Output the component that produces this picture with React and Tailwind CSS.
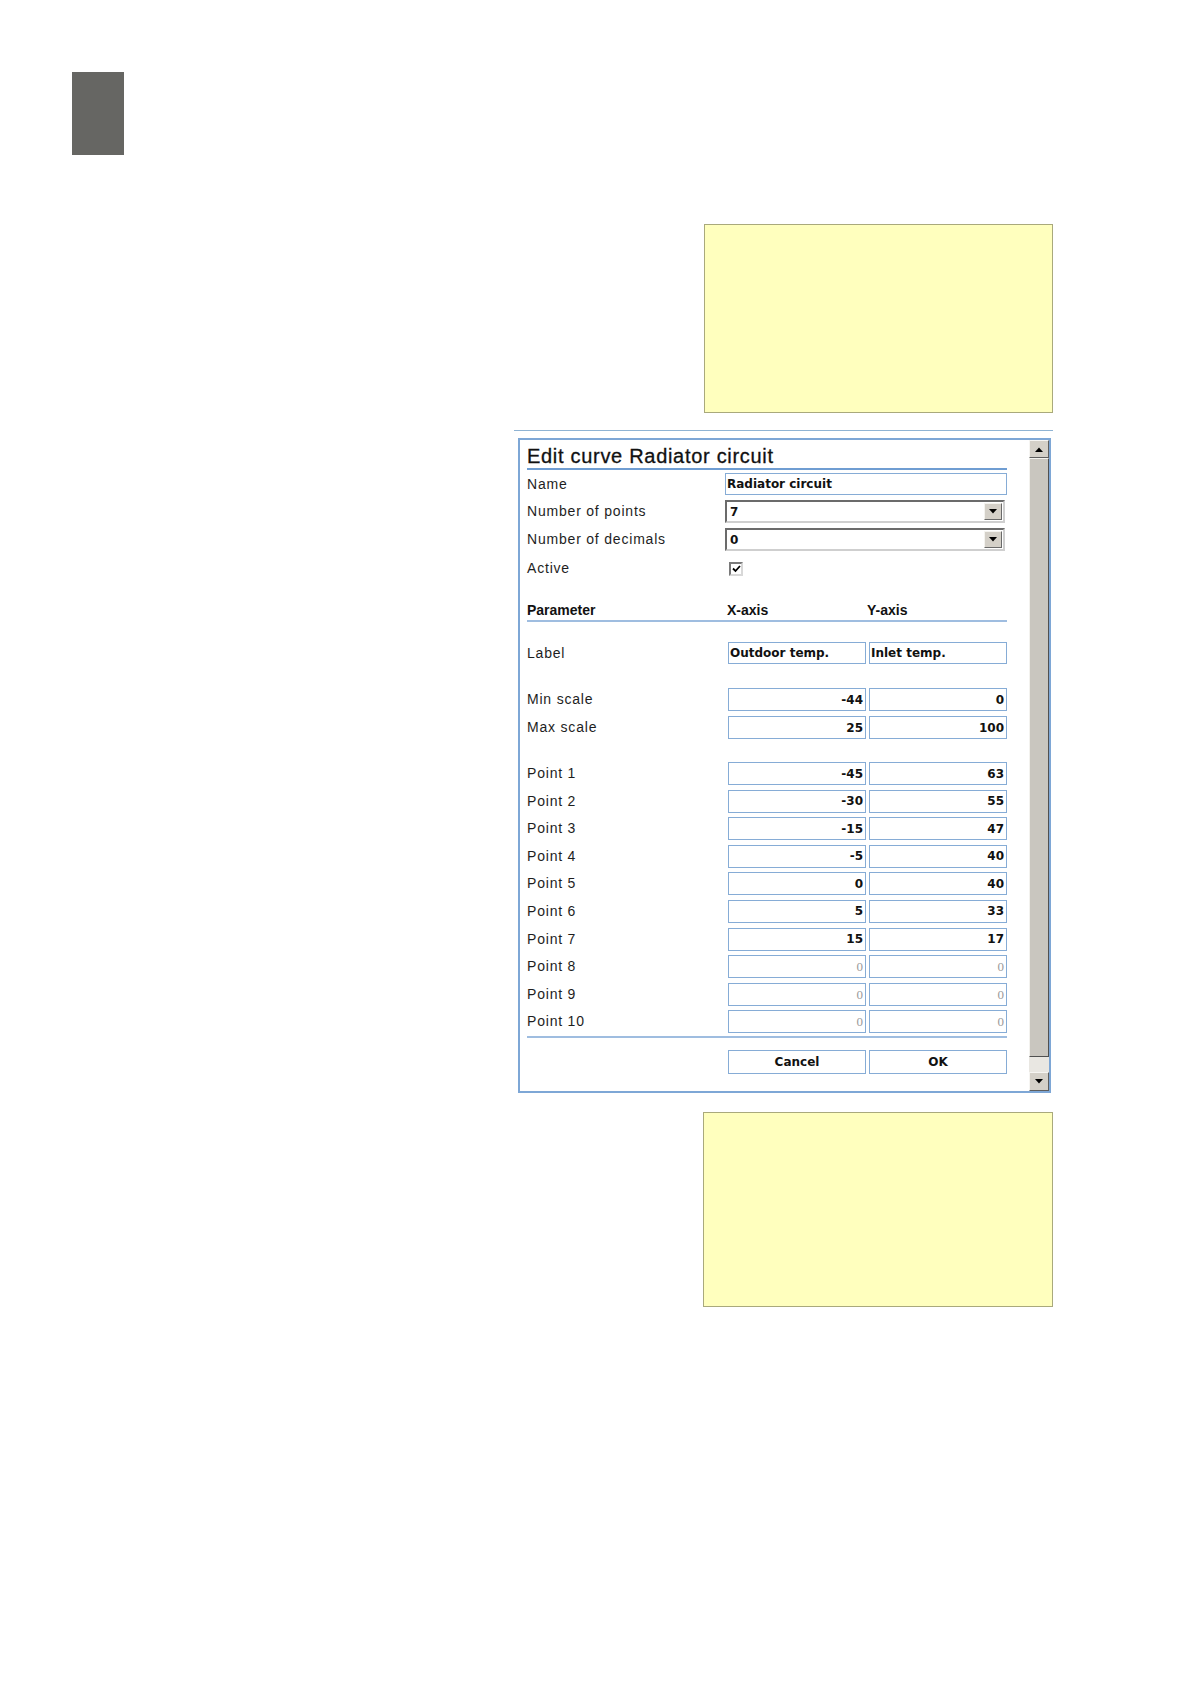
import React from 'react';

const labelCls = "font-['Liberation_Sans',Arial,sans-serif] text-[14px] tracking-[0.8px] text-[#1e1e1e]";
const valueCls = "font-['DejaVu_Sans',Verdana,sans-serif] font-bold text-[12px] text-[#111]";
const boxCls = "border-[1.5px] border-[#86acd6] bg-white";

const points = [
  [-45, 63],
  [-30, 55],
  [-15, 47],
  [-5, 40],
  [0, 40],
  [5, 33],
  [15, 17],
  [0, 0, true],
  [0, 0, true],
  [0, 0, true],
];

function NumBox({ value, off }) {
  return (
    <div className={`${boxCls} w-[138px] h-[23px] flex items-center justify-end pr-[2px]`}>
      <span className={off ? "font-['Liberation_Serif',serif] text-[13px] text-[#9a9a9a]" : `${valueCls} text-[11.5px]`}>
        {value}
      </span>
    </div>
  );
}

function PairRow({ label, x, y, off }) {
  return (
    <div className="flex items-center h-[23px]">
      <div className={`${labelCls} w-[201px]`}>{label}</div>
      <div className="flex gap-[3px]">
        <NumBox value={x} off={off} />
        <NumBox value={y} off={off} />
      </div>
    </div>
  );
}

function Caret() {
  return (
    <svg width="8" height="5" viewBox="0 0 8 5">
      <path d="M0 0h8L4 4.5z" fill="#000" />
    </svg>
  );
}

function Select({ value }) {
  return (
    <div className="w-[280px] h-[23px] flex items-center border-2 border-t-[#6b6b6b] border-l-[#6b6b6b] border-r-[#cfcfcf] border-b-[#cfcfcf] bg-white">
      <span className={`${valueCls} flex-1 pl-[3px]`}>{value}</span>
      <div className="w-[18px] h-[17px] mr-[1px] flex items-center justify-center bg-[#d4d0c8] border border-t-[#f4f3ef] border-l-[#f4f3ef] border-r-[#6a6a6a] border-b-[#6a6a6a]">
        <Caret />
      </div>
    </div>
  );
}

function ScrollBtn({ up }) {
  return (
    <div className="h-full flex items-center justify-center bg-[#d4d0c8] border border-t-[#f6f5f2] border-l-[#f6f5f2] border-r-[#5e5e5e] border-b-[#5e5e5e]">
      <svg width="8" height="5" viewBox="0 0 8 5" className={up ? 'rotate-180' : ''}>
        <path d="M0 0h8L4 4.5z" fill="#000" />
      </svg>
    </div>
  );
}

function Dialog() {
  return (
    <div className="mt-[7px] ml-[4px] w-[533px] h-[655px] border-2 border-[#7ea7d6] flex bg-white">
      <div className="flex-1 pl-[7px] pr-[22px]">
        <div className="pt-[4px] h-[28px] leading-[24px] font-['Liberation_Sans',Arial,sans-serif] font-medium text-[20px] tracking-[0.7px] text-[#111] [-webkit-text-stroke:0.3px_#111]">
          Edit curve Radiator circuit
        </div>
        <div className="h-[2px] bg-[#6f9dd2]" />

        <div className="mt-[3px] flex flex-col gap-[5px]">
          <div className="flex items-center h-[22px]">
            <div className={`${labelCls} w-[198px]`}>Name</div>
            <div className={`${boxCls} w-[282px] h-[22px] flex items-center pl-[1px]`}>
              <span className={valueCls}>Radiator circuit</span>
            </div>
          </div>
          <div className="flex items-center h-[23px]">
            <div className={`${labelCls} w-[198px]`}>Number of points</div>
            <Select value="7" />
          </div>
          <div className="flex items-center h-[23px]">
            <div className={`${labelCls} w-[198px]`}>Number of decimals</div>
            <Select value="0" />
          </div>
          <div className="flex items-center h-[25px]">
            <div className={`${labelCls} w-[202px]`}>Active</div>
            <div className="w-[14px] h-[14px] border-2 border-t-[#7a7a7a] border-l-[#7a7a7a] border-r-[#d8d8d8] border-b-[#d8d8d8] bg-white flex items-center justify-center">
              <svg width="9" height="8" viewBox="0 0 9 8">
                <path d="M1 3.5l2.5 2.5L8 1" stroke="#000" strokeWidth="1.8" fill="none" />
              </svg>
            </div>
          </div>
        </div>

        <div className="mt-[19px] h-[20px] flex items-center font-['Liberation_Sans',Arial,sans-serif] font-bold text-[14px] text-[#111]">
          <div className="w-[200px]">Parameter</div>
          <div className="w-[140px]">X-axis</div>
          <div>Y-axis</div>
        </div>
        <div className="h-[2px] bg-[#9fbde0]" />

        <div className="mt-[20px] flex items-center h-[22px]">
          <div className={`${labelCls} w-[201px]`}>Label</div>
          <div className="flex gap-[3px]">
            <div className={`${boxCls} w-[138px] h-[22px] flex items-center pl-[1px]`}>
              <span className={valueCls}>Outdoor temp.</span>
            </div>
            <div className={`${boxCls} w-[138px] h-[22px] flex items-center pl-[1px]`}>
              <span className={valueCls}>Inlet temp.</span>
            </div>
          </div>
        </div>

        <div className="mt-[24px] flex flex-col gap-[5px]">
          <PairRow label="Min scale" x="-44" y="0" />
          <PairRow label="Max scale" x="25" y="100" />
        </div>

        <div className="mt-[23px] flex flex-col gap-[4.6px]">
          {points.map(([x, y, off], i) => (
            <PairRow key={i} label={`Point ${i + 1}`} x={x} y={y} off={off} />
          ))}
        </div>

        <div className="mt-[3px] h-[2px] bg-[#9fbde0]" />

        <div className="mt-[12px] ml-[201px] flex gap-[3px]">
          <div className={`${boxCls} w-[138px] h-[24px] flex items-center justify-center`}>
            <span className={valueCls}>Cancel</span>
          </div>
          <div className={`${boxCls} w-[138px] h-[24px] flex items-center justify-center`}>
            <span className={valueCls}>OK</span>
          </div>
        </div>
      </div>

      <div className="w-[20px] flex flex-col">
        <div className="h-[18px]"><ScrollBtn up /></div>
        <div className="flex-1 bg-[#c9c6bf] border border-t-[#f3f2ee] border-l-[#f3f2ee] border-r-[#505050] border-b-[#505050]" />
        <div className="h-[15px] bg-[#e9e7e2]" />
        <div className="h-[19px]"><ScrollBtn /></div>
      </div>
    </div>
  );
}

export default function App() {
  return (
    <div className="w-[1191px] min-h-[1684px] bg-white">
      <div className="pt-[72px] pl-[72px]">
        <div className="w-[52px] h-[83px] bg-[#666663]" />
      </div>
      <div className="ml-[514px] w-[539px]">
        <div className="ml-[190px] mt-[69px] h-[189px] border border-[#a9a97c] bg-[#ffffbe]" />
        <div className="mt-[17px] h-px bg-[#8fb3d3]" />
        <Dialog />
        <div className="ml-[189px] mt-[19px] h-[195px] border border-[#a9a97c] bg-[#ffffbe]" />
      </div>
    </div>
  );
}
